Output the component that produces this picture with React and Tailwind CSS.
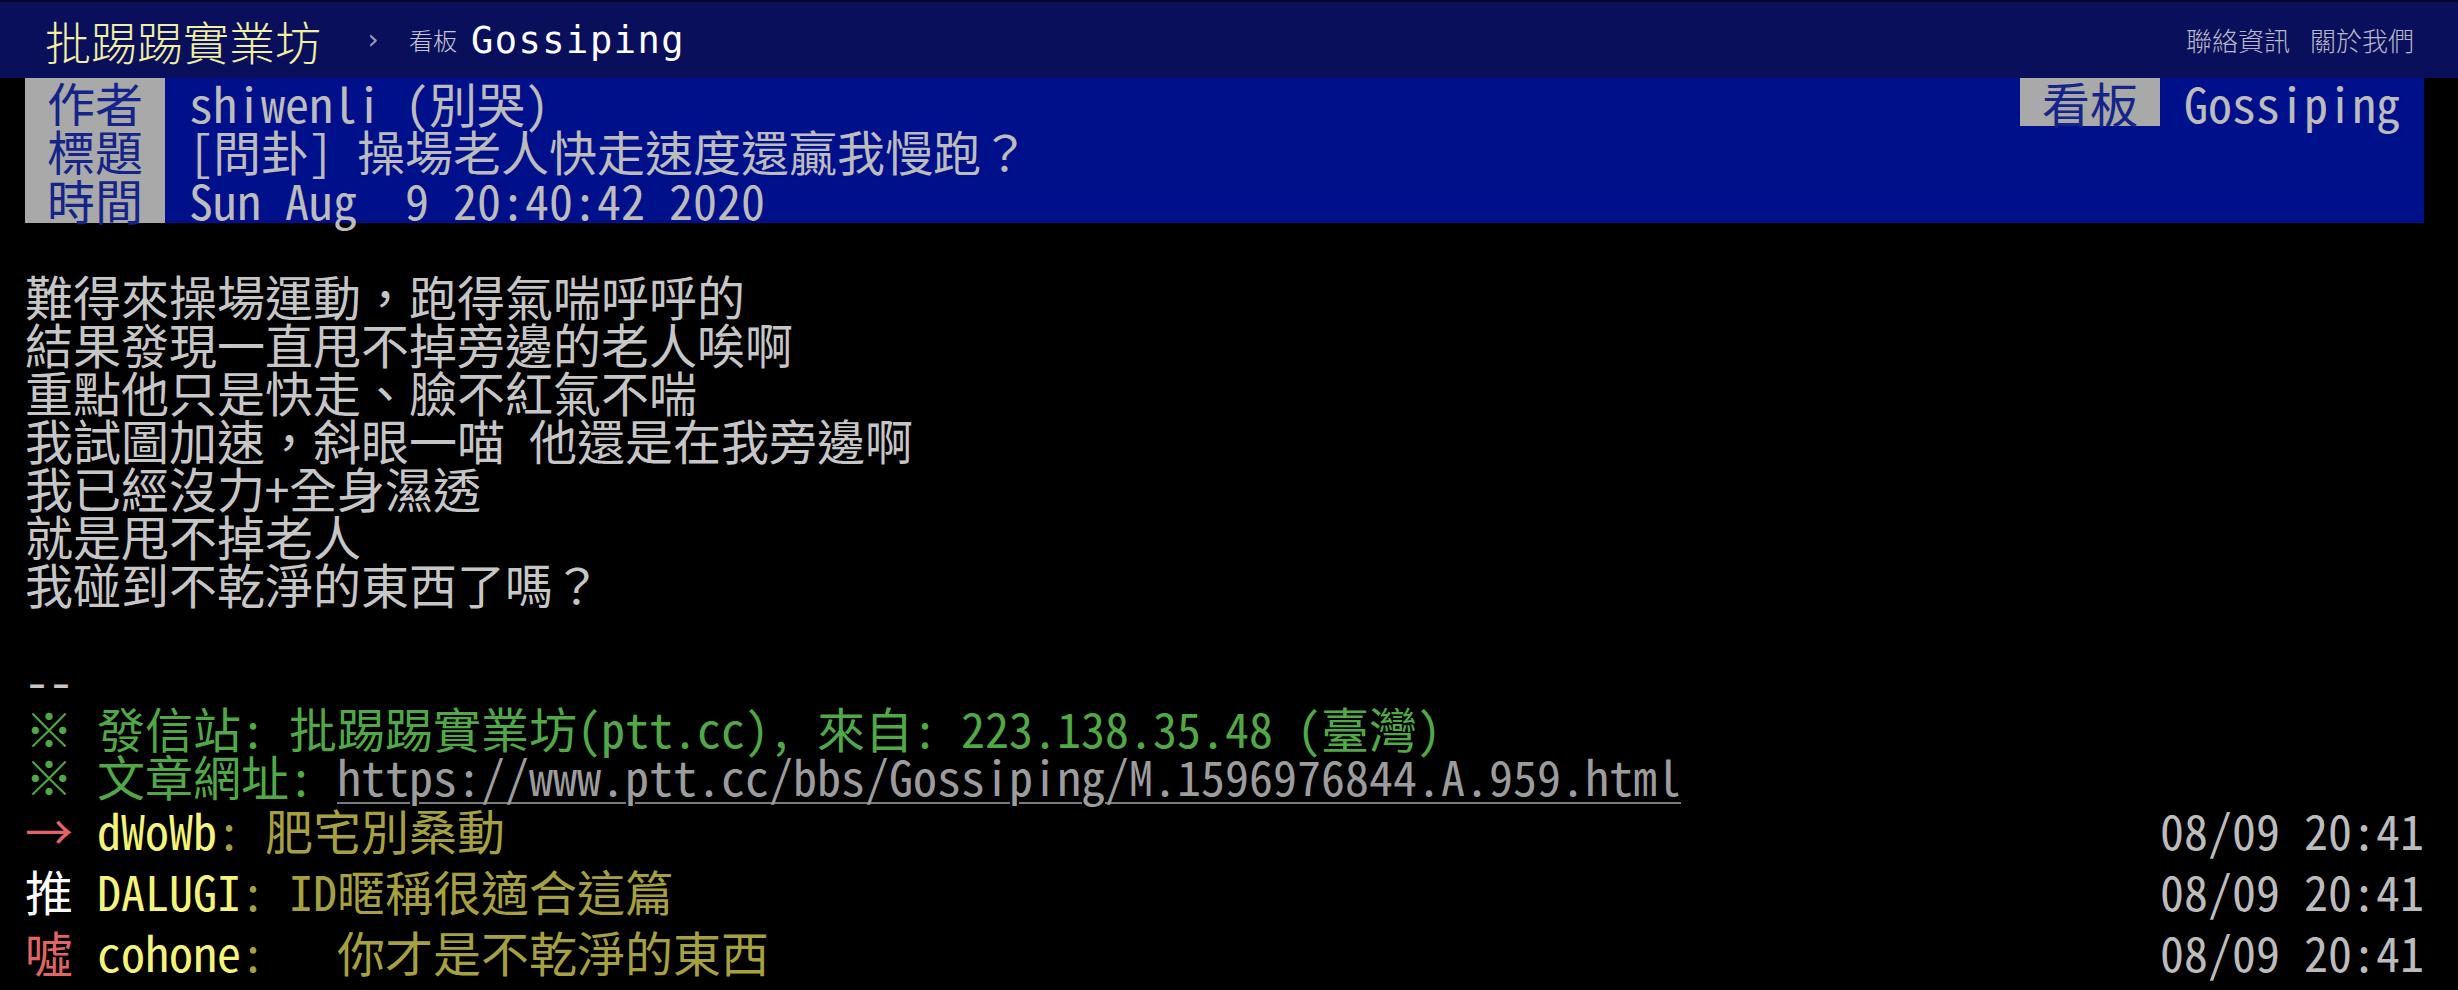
const mono = "font-['Noto_Sans_Mono_CJK_TC','Noto_Sans_CJK_TC',monospace]";

const metaRows = [
  { tag: '作者', value: 'shiwenli (別哭)', right: { tag: '看板', value: 'Gossiping' } },
  { tag: '標題', value: '[問卦] 操場老人快走速度還贏我慢跑？' },
  { tag: '時間', value: 'Sun Aug  9 20:40:42 2020' },
];

const bodyLines = [
  '難得來操場運動，跑得氣喘呼呼的',
  '結果發現一直甩不掉旁邊的老人唉啊',
  '重點他只是快走、臉不紅氣不喘',
  '我試圖加速，斜眼一喵 他還是在我旁邊啊',
  '我已經沒力+全身濕透',
  '就是甩不掉老人',
  '我碰到不乾淨的東西了嗎？',
];

const pushes = [
  { tag: '→ ', tagColor: 'text-[#e06666]', user: 'dWoWb', content: ': 肥宅別桑動', time: '08/09 20:41' },
  { tag: '推 ', tagColor: 'text-white', user: 'DALUGI', content: ': ID暱稱很適合這篇', time: '08/09 20:41' },
  { tag: '噓 ', tagColor: 'text-[#e06666]', user: 'cohone', content: ':   你才是不乾淨的東西', time: '08/09 20:41' },
];

function MetaTag({ children }) {
  return (
    <span className="w-[140px] shrink-0 bg-[#a9a9a9] text-center text-[#142488]">{children}</span>
  );
}

export default function App() {
  return (
    <div className="min-h-screen w-[2458px] overflow-hidden bg-black">
      {/* Top bar */}
      <header className="flex h-[78px] items-center justify-between border-t-2 border-[#04062a] bg-[#0a0f5c] pl-[45px] pr-[44px]">
        <div className="flex items-center">
          <span className="font-['Noto_Sans_CJK_TC',sans-serif] text-[46px] font-light leading-none text-[#f2f0a0]">批踢踢實業坊</span>
          <span className="ml-[44px] w-[16px] text-center font-['DejaVu_Sans',sans-serif] text-[28px] leading-none text-[#9a9cb0]">›</span>
          <span className="ml-[28px] font-['Noto_Sans_CJK_TC',sans-serif] text-[24px] font-light leading-none text-[#c8c8d0]">看板</span>
          <span className="ml-[14px] font-['DejaVu_Sans_Mono',monospace] text-[37px] leading-none tracking-[1.5px] text-white">Gossiping</span>
        </div>
        <nav className="flex gap-[20px] font-['Noto_Sans_CJK_TC',sans-serif] text-[26px] font-light leading-none text-[#b8b8c6]">
          <a>聯絡資訊</a>
          <a>關於我們</a>
        </nav>
      </header>

      <main className={`${mono} pl-[25px] pr-[34px] text-[48px] leading-[48px] text-[#c6c6c6]`}>
        {/* Article meta */}
        <div className="bg-[#000f8a] leading-[48.33px]">
          {metaRows.map(row => (
            <div key={row.tag} className="flex justify-between">
              <div className="flex">
                <MetaTag>{row.tag}</MetaTag>
                <span className="whitespace-pre px-[24px] text-[#bcbcbc]">{row.value}</span>
              </div>
              {row.right && (
                <div className="flex">
                  <MetaTag>{row.right.tag}</MetaTag>
                  <span className="whitespace-pre px-[24px] text-[#bcbcbc]">{row.right.value}</span>
                </div>
              )}
            </div>
          ))}
        </div>

        {/* Body */}
        <div className="whitespace-pre">
          <div>{' '}</div>
          {bodyLines.map(line => (
            <div key={line}>{line}</div>
          ))}
          <div>{' '}</div>
          <div>--</div>
          <div className="text-[#50a846]">※ 發信站: 批踢踢實業坊(ptt.cc), 來自: 223.138.35.48 (臺灣)</div>
          <div className="text-[#50a846]">
            ※ 文章網址: <a className="text-[#9c9c9c] underline decoration-[#7a7a7a] decoration-2 underline-offset-[6px]">https://www.ptt.cc/bbs/Gossiping/M.1596976844.A.959.html</a>
          </div>
        </div>

        {/* Pushes */}
        {pushes.map(p => (
          <div key={p.user} className="flex h-[61px] items-center whitespace-pre">
            <span className={p.tagColor}>{p.tag}</span>
            <span className="text-[#f4f47a]">{p.user}</span>
            <span className="text-[#a6a040]">{p.content}</span>
            <span className="ml-auto text-[#bcbcbc]">{p.time}</span>
          </div>
        ))}
      </main>
    </div>
  );
}
